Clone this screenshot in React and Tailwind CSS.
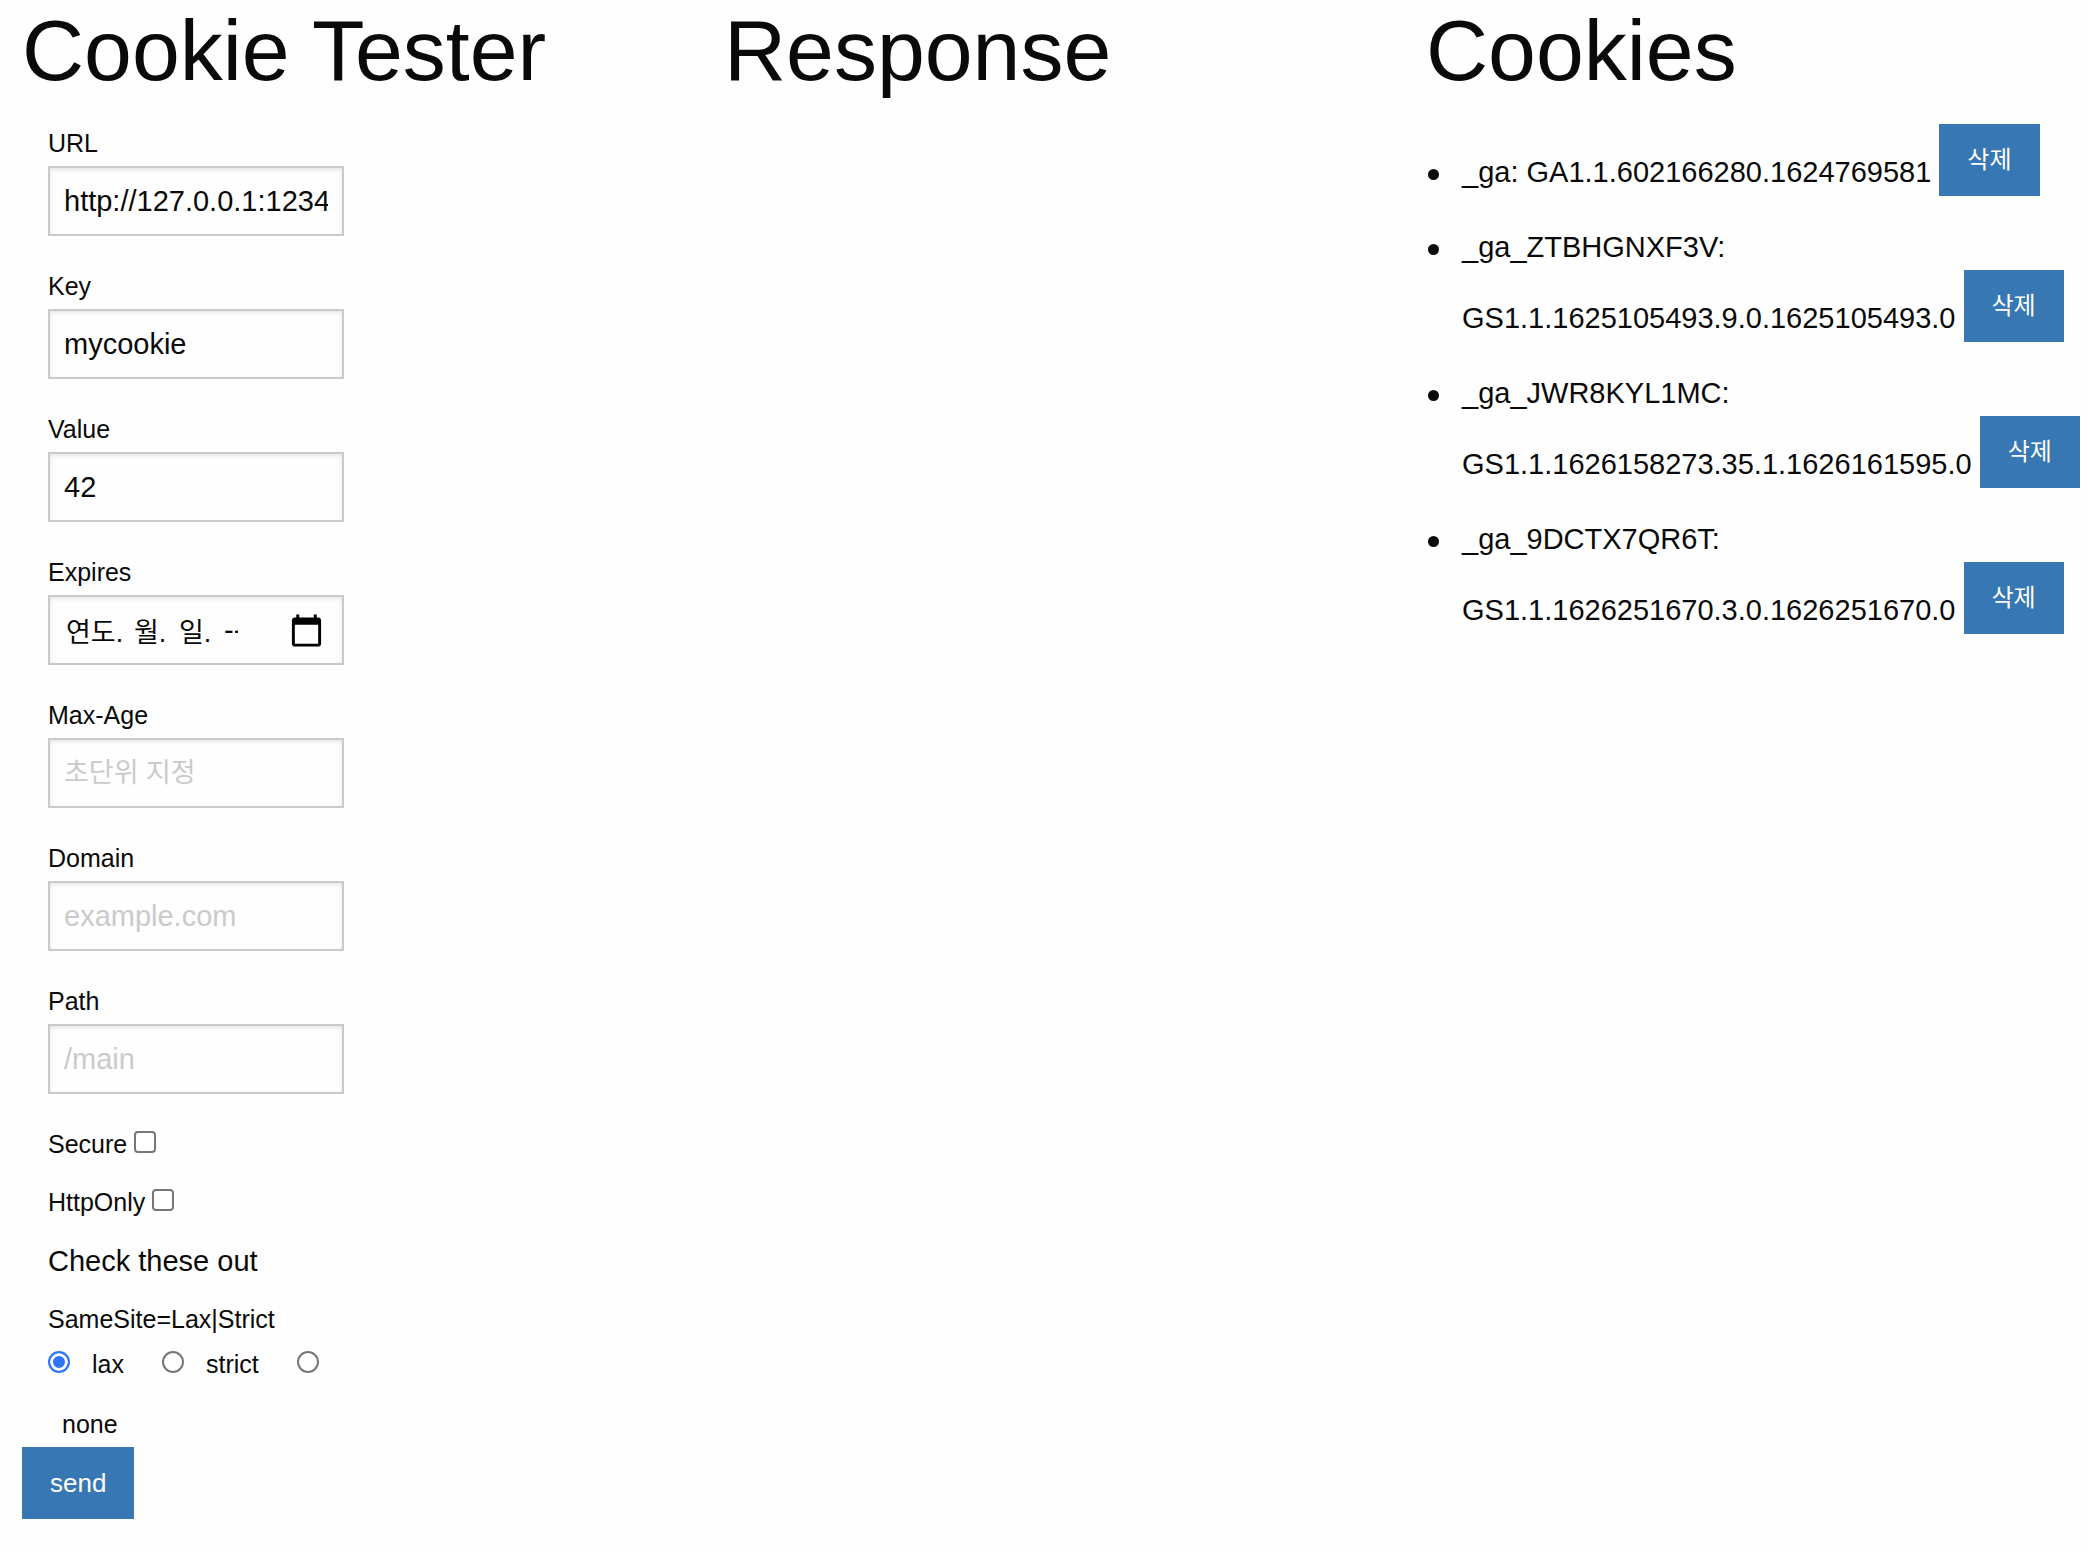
import React from "react";

const inputBox =
  "block h-[70px] w-full border-2 border-[#cacaca] bg-[#fefefe] px-[14px] shadow-[inset_0_2px_4px_rgba(10,10,10,0.1)] outline-none placeholder:text-[#cacaca] placeholder:opacity-100";
const labelText = "block text-[25px] leading-[45px]";
const tick =
  "inline-block size-[22px] shrink-0 appearance-none border-2 border-[#767676] bg-white align-baseline";
const buttonBase =
  "inline-block h-[72px] border-2 border-transparent bg-[#3777b4] bg-clip-border px-[26px] leading-none text-[#fefefe]";

const cookies = [
  { name: "_ga", value: "GA1.1.602166280.1624769581" },
  { name: "_ga_ZTBHGNXF3V", value: "GS1.1.1625105493.9.0.1625105493.0" },
  { name: "_ga_JWR8KYL1MC", value: "GS1.1.1626158273.35.1.1626161595.0" },
  { name: "_ga_9DCTX7QR6T", value: "GS1.1.1626251670.3.0.1626251670.0" },
];

function Heading({ children }) {
  return <h1 className="mb-[21px] text-[86px] leading-[100px]">{children}</h1>;
}

function Field({ id, label, value, placeholder, korean }) {
  return (
    <div className="mb-7">
      <label htmlFor={id} className={labelText}>
        {label}
      </label>
      <input
        id={id}
        type="text"
        defaultValue={value}
        placeholder={placeholder}
        className={`${inputBox} ${korean ? "text-[27px]" : "text-[29px]"}`}
      />
    </div>
  );
}

function DatePart({ id, label, value, className }) {
  return (
    <input
      id={id}
      type="text"
      aria-label={label}
      defaultValue={value}
      className={`h-full shrink-0 bg-transparent outline-none ${className}`}
    />
  );
}

function ExpiresField() {
  return (
    <div className="mb-7">
      <label htmlFor="expires" className={labelText}>
        Expires
      </label>
      <div className={`${inputBox} text-[27px]`}>
        <div className="flex h-full items-center pl-0.5">
          <DatePart id="expires" label="연도" value="연도." className="w-[68px]" />
          <DatePart label="월" value="월." className="w-[45px]" />
          <DatePart label="일" value="일." className="w-[45px]" />
          <DatePart label="시간" value="--:--" className="w-[14px] text-[29px]" />
          <button type="button" aria-label="날짜 선택" className="mr-1 ml-auto">
            <svg viewBox="0 0 24 24" className="size-[35px]" fill="#000" aria-hidden="true">
              <path d="M20 3h-1V1h-2v2H7V1H5v2H4c-1.1 0-2 .9-2 2v16c0 1.1.9 2 2 2h16c1.1 0 2-.9 2-2V5c0-1.1-.9-2-2-2zm0 18H4V8h16v13z" />
            </svg>
          </button>
        </div>
      </div>
    </div>
  );
}

function Check({ id, label }) {
  return (
    <div className="mb-[13px] text-[25px] leading-[45px]">
      <label htmlFor={id}>{label}</label>{" "}
      <input id={id} type="checkbox" className={`${tick} rounded-[4px]`} />
    </div>
  );
}

function SameSite() {
  return (
    <div role="radiogroup" aria-labelledby="samesite">
      <span id="samesite" className={labelText}>
        SameSite=Lax|Strict
      </span>
      <div className="flex flex-wrap items-baseline gap-y-[15px]">
        {["lax", "strict", "none"].map((option) => (
          <React.Fragment key={option}>
            <input
              id={option}
              type="radio"
              name="samesite"
              value={option}
              defaultChecked={option === "lax"}
              className={`${tick} mr-2 rounded-full checked:border-[#2f76f6] checked:bg-[#2f76f6] checked:shadow-[inset_0_0_0_3px_white]`}
            />
            <label htmlFor={option} className="mr-[38px] ml-[14px] text-[25px] leading-[45px]">
              {option}
            </label>
          </React.Fragment>
        ))}
      </div>
    </div>
  );
}

export default function App() {
  return (
    <main className="grid min-h-screen grid-cols-3 gap-x-10 bg-[#fefefe] pl-[22px] font-['Liberation_Sans','Noto_Sans_CJK_KR',sans-serif] text-[29px] leading-[46px] text-[#0a0a0a]">
      <section>
        <Heading>Cookie Tester</Heading>
        <form onSubmit={(e) => e.preventDefault()}>
          <div className="ml-[26px] w-[296px]">
            <Field id="url" label="URL" value="http://127.0.0.1:1234" />
            <Field id="key" label="Key" value="mycookie" />
            <Field id="value" label="Value" value="42" />
            <ExpiresField />
            <Field id="max-age" label="Max-Age" placeholder="초단위 지정" korean />
            <Field id="domain" label="Domain" placeholder="example.com" />
            <Field id="path" label="Path" placeholder="/main" />
            <Check id="secure" label="Secure" />
            <Check id="httponly" label="HttpOnly" />
            <p className="mb-[13px]">Check these out</p>
            <SameSite />
          </div>
          <button type="submit" className={`${buttonBase} text-[26px]`}>
            send
          </button>
        </form>
      </section>

      <section>
        <Heading>Response</Heading>
      </section>

      <section>
        <Heading>Cookies</Heading>
        <ul className="ml-9 pt-[3px]">
          {cookies.map((cookie) => (
            <li
              key={cookie.name}
              className="before:mr-[23px] before:-ml-[34px] before:inline-block before:size-[11px] before:rounded-full before:bg-[#0a0a0a] before:align-middle before:content-['']"
            >
              {cookie.name}: {cookie.value}{" "}
              <button type="button" className={`${buttonBase} mb-7 align-middle text-[24px]`}>
                삭제
              </button>
            </li>
          ))}
        </ul>
      </section>
    </main>
  );
}
